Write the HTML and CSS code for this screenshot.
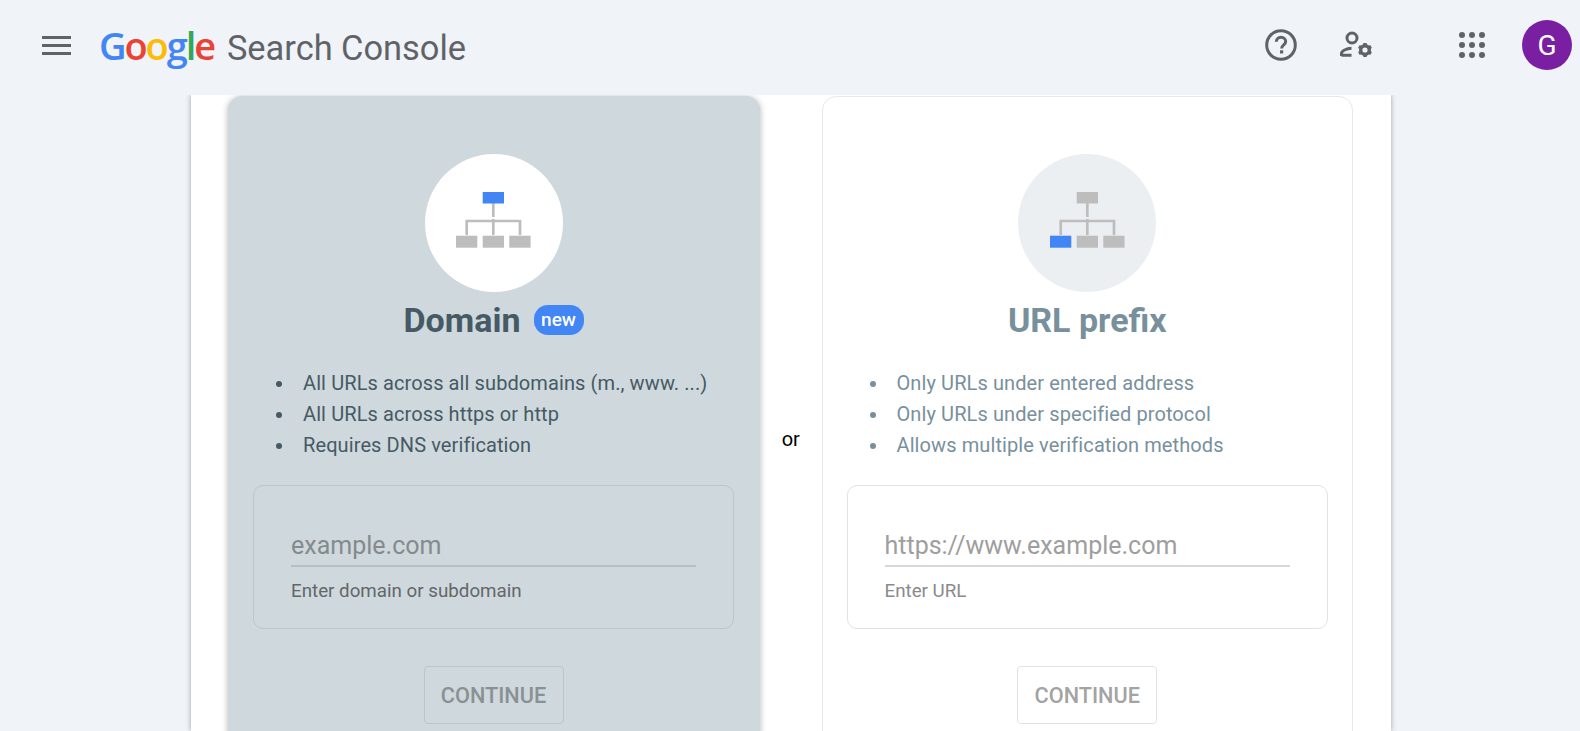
FILE: index.html
```html
<!DOCTYPE html>
<html lang="en">
<head>
<meta charset="utf-8">
<title>Google Search Console</title>
<link rel="stylesheet" href="styles.css">
</head>
<body>
<header class="topbar">
  <svg class="menu" width="30" height="20" viewBox="0 0 30 20"><path d="M0 1.500h29M0 9.500h29M0 17.500h29" stroke="#5f6368" stroke-width="3" fill="none"/></svg>
  <div class="brand">
    <span class="logo"><span class="blue">G</span><span class="red">o</span><span class="yellow">o</span><span class="blue">g</span><span class="green">l</span><span class="red">e</span></span>
    <span class="product">Search Console</span>
  </div>
  <div class="actions">
    <svg class="icon-help" width="32" height="32" viewBox="0 0 32 32"><circle cx="16" cy="16" r="14.300" fill="none" stroke="#5f6368" stroke-width="3"/><path d="M11.300 12.800c0-2.700 2-4.500 4.700-4.500s4.700 1.800 4.700 4.300c0 3.300-4.100 3.300-4.100 7" fill="none" stroke="#5f6368" stroke-width="3"/><rect x="15" y="21.300" width="3.200" height="3.200" fill="#5f6368"/></svg>
    <svg class="icon-user" width="33" height="27" viewBox="0 0 33 27"><circle cx="12" cy="7" r="5" fill="none" stroke="#5f6368" stroke-width="3"/><path d="M1.500 25v-2.500c0-2.500 5-5 10-5.200M1.500 24.300h10" fill="none" stroke="#5f6368" stroke-width="3"/><circle cx="25" cy="19" r="4.300" fill="none" stroke="#5f6368" stroke-width="3.400"/><path d="M25 12v3M25 23v3M18.900 15.500l2.600 1.500M28.500 21l2.600 1.500M18.900 22.500l2.600-1.500M28.500 17l2.600-1.500" stroke="#5f6368" stroke-width="3.400" fill="none"/></svg>
    <svg class="icon-apps" width="26" height="26" viewBox="0 0 26 26" fill="#5f6368"><circle cx="3" cy="3" r="3"/><circle cx="13" cy="3" r="3"/><circle cx="23" cy="3" r="3"/><circle cx="3" cy="13" r="3"/><circle cx="13" cy="13" r="3"/><circle cx="23" cy="13" r="3"/><circle cx="3" cy="23" r="3"/><circle cx="13" cy="23" r="3"/><circle cx="23" cy="23" r="3"/></svg>
    <div class="avatar">G</div>
  </div>
</header>
<main class="panel">
  <section class="card card-active">
    <div class="disc">
      <svg width="75" height="56" viewBox="0 0 75 56"><path d="M37.300 11v14M10.700 43V29h53.300v14M37.300 27v16" fill="none" stroke="#bdbdbd" stroke-width="2.700"/><rect x="26.700" width="21.300" height="11.500" fill="#4285f4"/><rect y="43.700" width="21.300" height="12" fill="#bdbdbd"/><rect x="26.700" y="43.700" width="21.300" height="12" fill="#bdbdbd"/><rect x="53.300" y="43.700" width="21.300" height="12" fill="#bdbdbd"/></svg>
    </div>
    <h2 class="title">Domain<span class="badge">new</span></h2>
    <ul class="points">
      <li>All URLs across all subdomains (m., www. ...)</li>
      <li>All URLs across https or http</li>
      <li>Requires DNS verification</li>
    </ul>
    <div class="field">
      <div class="placeholder">example.com</div>
      <div class="hint">Enter domain or subdomain</div>
    </div>
    <div class="button">CONTINUE</div>
  </section>
  <div class="or">or</div>
  <section class="card">
    <div class="disc">
      <svg width="75" height="56" viewBox="0 0 75 56"><path d="M37.300 11v14M10.700 43V29h53.300v14M37.300 27v16" fill="none" stroke="#bdbdbd" stroke-width="2.700"/><rect x="26.700" width="21.300" height="11.500" fill="#bdbdbd"/><rect y="43.700" width="21.300" height="12" fill="#4285f4"/><rect x="26.700" y="43.700" width="21.300" height="12" fill="#bdbdbd"/><rect x="53.300" y="43.700" width="21.300" height="12" fill="#bdbdbd"/></svg>
    </div>
    <h2 class="title">URL prefix</h2>
    <ul class="points">
      <li>Only URLs under entered address</li>
      <li>Only URLs under specified protocol</li>
      <li>Allows multiple verification methods</li>
    </ul>
    <div class="field">
      <div class="placeholder">https://www.example.com</div>
      <div class="hint">Enter URL</div>
    </div>
    <div class="button">CONTINUE</div>
  </section>
</main>
</body>
</html>
```
FILE: styles.css
```css
* { box-sizing: border-box; }
html, body { margin: 0; height: 731px; overflow: hidden; }
body { background: #f0f3f8; font-family: Roboto, "Liberation Sans", sans-serif; }

.topbar { position: relative; z-index: 1; height: 95px; display: flex; align-items: center; padding-left: 42px; padding-bottom: 5px; background: #f0f3f8; }
.menu { flex: none; margin-top: 2px; }
.brand { display: flex; align-items: baseline; margin-left: 27px; margin-top: 3px; }
.logo { font-family: "Open Sans", Roboto, sans-serif; font-size: 38px; font-weight: 600; letter-spacing: -2.100px; line-height: 44px; }
.blue { color: #4285f4; } .red { color: #ea4335; } .yellow { color: #fbbc05; } .green { color: #34a853; }
.product { margin-left: 13px; font-size: 34.400px; color: #5f6368; line-height: 44px; }
.actions { margin-left: auto; display: flex; align-items: center; padding-right: 8px; }
.icon-help { margin-right: 43px; }
.icon-user { margin-right: 86px; margin-top: -1px; }
.icon-apps { margin-right: 37px; }
.avatar { width: 50px; height: 50px; border-radius: 50%; background: #7b1fa2; color: #fff; font-size: 28px; display: flex; align-items: center; justify-content: center; }

.panel { width: 1200px; margin-left: 191px; height: 636px; background: #fff; display: flex; padding: 1px 0 0 37px; box-shadow: 0 0 5px rgba(60, 64, 67, .45); }
.card { width: 531.500px; flex: none; height: 700px; border: 1px solid #e6e8ea; border-radius: 14px; padding: 57px 24px 0; display: flex; flex-direction: column; align-items: center; color: #78909c; }
.card-active { width: 532px; padding-right: 25px; background: #cfd8dc; border-color: #cfd8dc; color: #455a64; box-shadow: 0 1px 6px rgba(60, 64, 67, .4); }
.or { width: 61.500px; flex: none; text-align: center; font-size: 20px; color: #000; padding-top: 331px; }

.disc { width: 138px; height: 138px; border-radius: 50%; background: #eceff1; display: flex; align-items: center; justify-content: center; flex: none; padding-bottom: 6px; }
.card-active .disc { background: #fff; }
.disc svg { display: block; }
.title { margin: 8px 0 0; height: 40px; font-size: 34px; line-height: 40px; font-weight: 700; display: flex; align-items: center; }
.badge { margin-left: 13px; width: 50px; height: 30px; border-radius: 14px; background: #4285f4; color: #fff; font-size: 19px; font-weight: 500; display: flex; align-items: center; justify-content: center; }
.points { align-self: stretch; list-style: none; margin: 28px 0 0; padding: 0 0 0 23px; font-size: 20px; letter-spacing: .1px; line-height: 31px; height: 93px; }
.points li { display: flex; align-items: center; }
.points li::before { content: ""; width: 6px; height: 6px; margin-right: 21px; border-radius: 50%; background: currentColor; flex: none; }
.field { align-self: stretch; margin-top: 24px; height: 144px; border: 1px solid #e0e3e5; border-radius: 10px; padding: 38px 37px 0; flex: none; }
.card-active .field { border-color: #bcc5c9; }
.placeholder { height: 43px; font-size: 25px; line-height: 44px; color: #9e9e9e; border-bottom: 2px solid #d6d8d9; }
.card-active .placeholder { color: #848b8e; border-color: #b6bfc3; }
.hint { margin-top: 12px; font-size: 18.750px; line-height: 24px; color: #8a8a8a; }
.card-active .hint { color: #62676a; }
.button { margin-top: 37px; width: 140px; height: 58px; flex: none; border: 1px solid #e0e3e5; border-radius: 4px; display: flex; align-items: center; justify-content: center; font-size: 21.700px; font-weight: 500; color: #a3a3a3; }
.card-active .button { border-color: #bcc5c9; color: #8a9194; }
```
